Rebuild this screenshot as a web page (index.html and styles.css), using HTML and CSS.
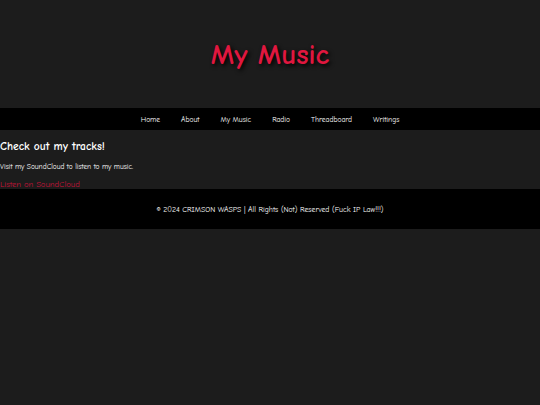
FILE: index.html
```html
<!DOCTYPE html>
<html>
<head>
<meta charset="utf-8">
<link rel="stylesheet" href="styles.css">
</head>
<body>
<header class="hero">
  <h1 class="title">My Music</h1>
</header>
<nav class="nav">
  <a href="#">Home</a>
  <a href="#">About</a>
  <a href="#">My Music</a>
  <a href="#">Radio</a>
  <a href="#">Threadboard</a>
  <a href="#">Writings</a>
</nav>
<main class="content">
  <h2 class="heading">Check out my tracks!</h2>
  <p class="text">Visit my SoundCloud to listen to my music.</p>
  <a class="link" href="#">Listen on SoundCloud</a>
</main>
<footer class="footer">
  <p>© 2024 CRIMSON WASPS | All Rights (Not) Reserved (Fuck IP Law!!!)</p>
</footer>
</body>
</html>
```
FILE: styles.css
```css
html, body {
  margin: 0;
  padding: 0;
  background: #1c1c1c;
  color: #ffffff;
  font-family: "Comic Sans MS", "Comic Neue", cursive;
}
.hero {
  height: 108px;
  display: flex;
  align-items: center;
  justify-content: center;
}
.title {
  margin: 0;
  font-size: 29px;
  font-weight: bold;
  color: #e0173f;
  text-shadow: 2px 2px 4px #000;
}
.nav {
  background: #000;
  height: 22px;
  display: flex;
  justify-content: center;
  align-items: center;
  gap: 21px;
}
.nav a {
  color: #fff;
  text-decoration: none;
  font-size: 7.5px;
}
.content {
  padding: 0;
}
.heading {
  margin: 10px 0 0;
  font-size: 11.5px;
}
.text {
  margin: 9px 0 9px;
  font-size: 7.4px;
}
.link {
  display: block;
  color: #c41238;
  text-decoration: none;
  font-size: 8.6px;
  line-height: 9px;
}
.footer {
  background: #000;
  height: 40px;
  display: flex;
  align-items: center;
  justify-content: center;
  font-size: 7.7px;
}
.footer p {
  margin: 0;
}
```
